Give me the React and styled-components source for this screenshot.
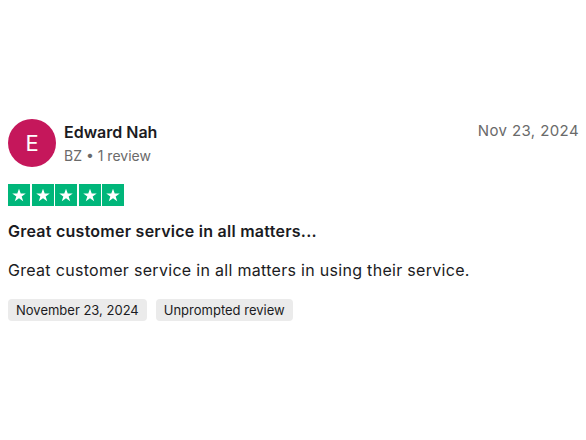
import React from 'react';
import styled, { createGlobalStyle } from 'styled-components';

const GlobalStyle = createGlobalStyle`
    html, body {
        margin: 0;
        padding: 0;
        background: #fff;
    }
    body {
        font-family: Inter, "Liberation Sans", Arial, sans-serif;
        color: #1b1b22;
    }
`;

const Page = styled.div`
    min-height: 100vh;
    display: flex;
    flex-direction: column;
    justify-content: center;
    padding: 0 7px 0 8px;
    box-sizing: border-box;
`;

const Card = styled.article`
    display: flex;
    flex-direction: column;
`;

const Header = styled.div`
    display: flex;
    align-items: flex-start;
    justify-content: space-between;
`;

const Consumer = styled.div`
    display: flex;
    align-items: center;
    gap: 8px;
`;

const Avatar = styled.div`
    width: 48px;
    height: 48px;
    border-radius: 50%;
    background: #c5175b;
    color: #fff;
    display: flex;
    align-items: center;
    justify-content: center;
    font-size: 22px;
    font-weight: 400;
`;

const Info = styled.div`
    display: flex;
    flex-direction: column;
    gap: 5px;
`;

const Name = styled.div`
    font-size: 16px;
    font-weight: 600;
    color: #1b1b22;
`;

const Meta = styled.div`
    font-size: 14px;
    color: #6a6a6a;
`;

const DateText = styled.time`
    font-size: 15px;
    letter-spacing: 0.4px;
    color: #6a6a6a;
    margin-top: 2px;
`;

const Stars = styled.div`
    display: flex;
    gap: 1.5px;
    margin-top: 17px;
`;

const StarBox = styled.div`
    width: 22px;
    height: 22px;
    background: #00b67a;
    display: flex;
    align-items: center;
    justify-content: center;
`;

const Title = styled.h2`
    font-size: 16px;
    font-weight: 600;
    letter-spacing: 0.25px;
    margin: 15px 0 0;
    color: #1b1b22;
`;

const Body = styled.p`
    font-size: 16px;
    letter-spacing: 0.3px;
    margin: 19px 0 0;
    color: #1b1b22;
`;

const Tags = styled.div`
    display: flex;
    gap: 9px;
    margin-top: 19px;
`;

const Tag = styled.span`
    background: #ebebeb;
    border-radius: 4px;
    padding: 3px 8px;
    font-size: 13px;
    line-height: 16px;
    color: #1b1b22;
`;

const Star = () => (
    <svg width="16" height="16" viewBox="0 0 24 24">
        <path fill="#fff" d="M12 2.5l2.6 7.1h7.5l-6.1 4.5 2.3 7.3L12 17l-6.3 4.4 2.3-7.3-6.1-4.5h7.5z" />
    </svg>
);

export default function App() {
    return (
        <>
            <GlobalStyle />
            <Page>
                <Card>
                    <Header>
                        <Consumer>
                            <Avatar>E</Avatar>
                            <Info>
                                <Name>Edward Nah</Name>
                                <Meta>BZ • 1 review</Meta>
                            </Info>
                        </Consumer>
                        <DateText>Nov 23, 2024</DateText>
                    </Header>
                    <Stars>
                        {[0, 1, 2, 3, 4].map(i => (
                            <StarBox key={i}><Star /></StarBox>
                        ))}
                    </Stars>
                    <Title>Great customer service in all matters...</Title>
                    <Body>Great customer service in all matters in using their service.</Body>
                    <Tags>
                        <Tag>November 23, 2024</Tag>
                        <Tag>Unprompted review</Tag>
                    </Tags>
                </Card>
            </Page>
        </>
    );
}
